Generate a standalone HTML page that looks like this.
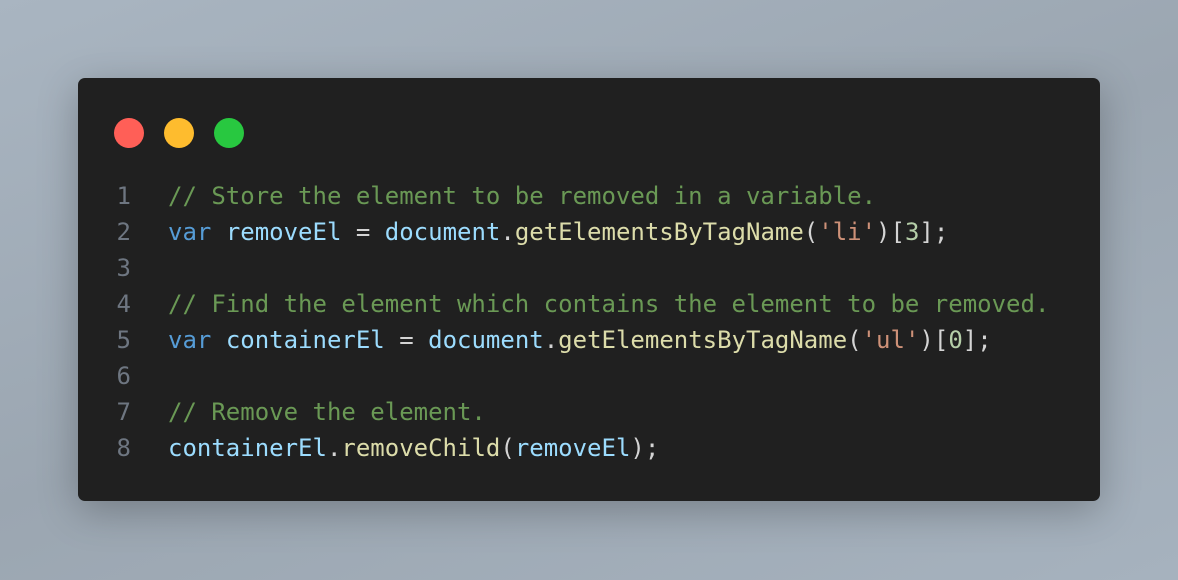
<!DOCTYPE html>
<html><head><meta charset="utf-8"><style>
html,body{margin:0;padding:0}
body{width:1178px;height:580px;overflow:hidden;position:relative;background:linear-gradient(160deg,#a9b5c1 0%,#9ba6b1 50%,#a6b2be 100%);}
.win{position:absolute;left:78px;top:78px;width:1022px;height:423px;background:#202020;border-radius:7px;box-shadow:0 10px 40px rgba(0,0,0,0.25);}
.dot{position:absolute;top:40px;width:30px;height:30px;border-radius:50%}
.code{position:absolute;left:0;top:100px;font-family:"DejaVu Sans Mono","Liberation Mono",monospace;font-size:24px;line-height:36px;white-space:pre;color:#d4d4d4}
.ln{display:inline-block;width:53px;text-align:right;color:#6e7681;margin-right:37px}
.c{color:#6a9955}.k{color:#569cd6}.v{color:#9cdcfe}.f{color:#dcdcaa}.s{color:#ce9178}.n{color:#b5cea8}
</style></head><body>
<div class="win">
<div class="dot" style="left:36px;background:#ff5f57"></div>
<div class="dot" style="left:86px;background:#febc2e"></div>
<div class="dot" style="left:136px;background:#28c840"></div>
<div class="code"><div><span class="ln">1</span><span class="c">// Store the element to be removed in a variable.</span></div><div><span class="ln">2</span><span class="k">var</span> <span class="v">removeEl</span> = <span class="v">document</span>.<span class="f">getElementsByTagName</span>(<span class="s">'li'</span>)[<span class="n">3</span>];</div><div><span class="ln">3</span></div><div><span class="ln">4</span><span class="c">// Find the element which contains the element to be removed.</span></div><div><span class="ln">5</span><span class="k">var</span> <span class="v">containerEl</span> = <span class="v">document</span>.<span class="f">getElementsByTagName</span>(<span class="s">'ul'</span>)[<span class="n">0</span>];</div><div><span class="ln">6</span></div><div><span class="ln">7</span><span class="c">// Remove the element.</span></div><div><span class="ln">8</span><span class="v">containerEl</span>.<span class="f">removeChild</span>(<span class="v">removeEl</span>);</div></div>
</div>
</body></html>
